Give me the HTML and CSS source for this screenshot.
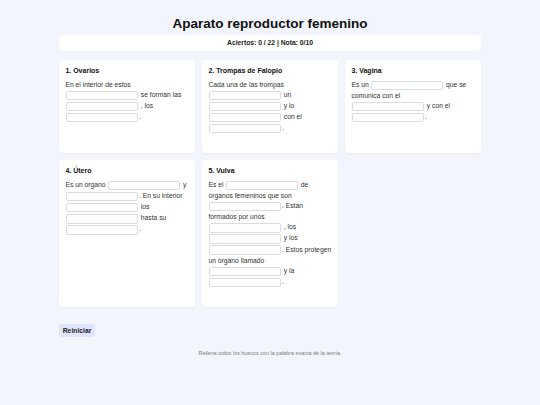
FILE: index.html
```html
<!DOCTYPE html>
<html lang="es">
<head>
    <meta charset="UTF-8">
    <meta name="viewport" content="width=device-width, initial-scale=1.0">
    <title>Aparato reproductor femenino</title>
    <link rel="stylesheet" href="styles.css">
</head>
<body>
    <div class="page">
        <h1>Aparato reproductor femenino</h1>

        <div class="score">Aciertos: 0 / 22 | Nota: 0/10</div>

        <div class="cards">
            <div class="card">
                <h3>1. Ovarios</h3>
                <p>En el interior de estos <input type="text" class="gap"> se forman las <input type="text" class="gap"> , los <input type="text" class="gap">.</p>
            </div>

            <div class="card">
                <h3>2. Trompas de Falopio</h3>
                <p>Cada una de las trompas <input type="text" class="gap"> un <input type="text" class="gap"> y lo <input type="text" class="gap"> con el <input type="text" class="gap">.</p>
            </div>

            <div class="card">
                <h3>3. Vagina</h3>
                <p>Es un <input type="text" class="gap"> que se comunica con el <input type="text" class="gap"> y con el <input type="text" class="gap">.</p>
            </div>

            <div class="card">
                <h3>4. Útero</h3>
                <p>Es un órgano <input type="text" class="gap"> y <input type="text" class="gap">. En su interior <input type="text" class="gap"> los <input type="text" class="gap"> hasta su <input type="text" class="gap">.</p>
            </div>

            <div class="card">
                <h3>5. Vulva</h3>
                <p>Es el <input type="text" class="gap"> de órganos femeninos que son <input type="text" class="gap">. Están formados por unos <input type="text" class="gap"> , los <input type="text" class="gap"> y los <input type="text" class="gap">. Estos protegen un órgano llamado <input type="text" class="gap"> y la <input type="text" class="gap">.</p>
            </div>
        </div>

        <div class="actions">
            <button type="button" class="reset-btn">Reiniciar</button>
        </div>

        <p class="hint">Rellena todos los huecos con la palabra exacta de la teoría.</p>
    </div>
</body>
</html>
```

FILE: styles.css
```css
* {
    margin: 0;
    padding: 0;
    box-sizing: border-box;
}

body {
    font-family: "Liberation Sans", Arial, sans-serif;
    background: #f3f5fd;
    color: #222;
}

.page {
    max-width: 422px;
    margin: 0 auto;
    padding: 16px 0 20px;
}

h1 {
    text-align: center;
    font-size: 13.5px;
    line-height: 16px;
    font-weight: bold;
    color: #111;
}

.score {
    margin-top: 3px;
    background: white;
    border-radius: 4px;
    padding: 4px;
    line-height: 8px;
    text-align: center;
    font-size: 6.75px;
    font-weight: bold;
}

.cards {
    display: grid;
    grid-template-columns: repeat(3, 1fr);
    gap: 7px;
    margin-top: 9px;
}

.card {
    background: white;
    border-radius: 4px;
    padding: 6.75px 6.4px 19px;
    box-shadow: 0 1px 2px rgba(30, 40, 90, 0.04);
}

.card h3 {
    font-size: 7px;
    line-height: 8.5px;
    font-weight: bold;
    color: #111;
    margin-bottom: 4.5px;
}

.card p {
    font-size: 6.75px;
    line-height: 10.1px;
    color: #333;
}

/* hueco para escribir la palabra */
.gap {
    width: 72px;
    height: 9.5px;
    margin: 0.8px;
    vertical-align: middle;
    border: 0.7px solid #d9dce4;
    border-radius: 2px;
    background: white;
    font-family: inherit;
    font-size: 6.75px;
    padding: 0 2px;
}

.gap:focus {
    outline: none;
    border-color: #8b9cf0;
}

.actions {
    margin-top: 12px;
}

.reset-btn {
    font-family: inherit;
    font-size: 6.75px;
    font-weight: bold;
    line-height: 8px;
    padding: 2.5px 3.75px;
    border: none;
    border-radius: 3px;
    background: #dfe5fc;
    color: #222;
    cursor: pointer;
}

.hint {
    margin-top: 12.5px;
    text-align: center;
    font-size: 5.4px;
    line-height: 6.5px;
    color: #7a7d85;
}
```
